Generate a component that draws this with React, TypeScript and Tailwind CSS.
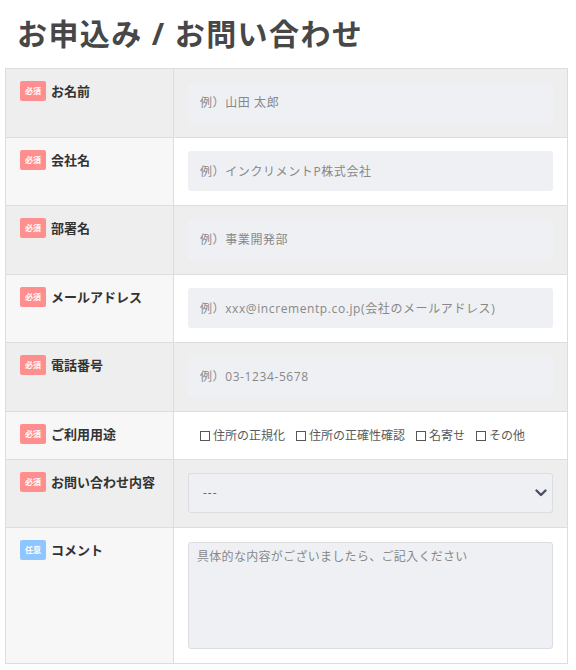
import React from 'react';

const FONT = { fontFamily: '"Open Sans", "Noto Sans CJK JP", sans-serif' };

const Badge = ({ required = true }: { required?: boolean }) => (
  <span
    className={`inline-flex h-[20px] w-[26px] shrink-0 items-center justify-center rounded-[2px] text-[8px] font-bold leading-none text-white ${
      required ? 'bg-[#ff8f8f]' : 'bg-[#8ec6ff]'
    }`}
  >
    {required ? '必須' : '任意'}
  </span>
);

const Row = ({
  label,
  required = true,
  grey,
  children,
}: {
  label: string;
  required?: boolean;
  grey: boolean;
  children: React.ReactNode;
}) => (
  <div className={`flex border-t border-[#dddddd] ${grey ? 'bg-[#eeeeee]' : 'bg-white'}`}>
    <div
      className={`flex w-[168px] shrink-0 items-start gap-[5px] border-r border-[#dddddd] pl-[14px] pt-[12px] ${
        grey ? 'bg-[#eeeeee]' : 'bg-[#f7f7f7]'
      }`}
    >
      <Badge required={required} />
      <span className="text-[13px] font-bold leading-[20px] text-[#333333]">{label}</span>
    </div>
    <div className="flex-1 px-[14px] py-[13.75px]">{children}</div>
  </div>
);

const TextInput = ({ placeholder }: { placeholder: string }) => (
  <input
    type="text"
    placeholder={placeholder}
    className="block h-[40px] w-full rounded-[3px] bg-[#eff0f4] px-[12px] text-[12px] tracking-[0.6px] text-[#333] outline-none placeholder:text-[#888888]"
    style={FONT}
  />
);

const Check = ({ label }: { label: string }) => (
  <label className="flex items-center gap-[3px]">
    <span className="inline-block h-[10px] w-[10px] border border-[#555555] bg-white" />
    <span className="text-[12px] leading-none text-[#5a5a5a]">{label}</span>
  </label>
);

export default function App() {
  return (
    <div className="min-h-screen bg-white pb-[7px]" style={FONT}>
      <h1 className="ml-[17px] pt-[16px] pb-[16px] text-[30px] font-bold leading-[36px] tracking-[1.4px] text-[#474747]">
        お申込み / お問い合わせ
      </h1>

      <div className="ml-[5px] w-[563px] border-b border-l border-r border-[#dddddd]">
        <Row label="お名前" grey>
          <TextInput placeholder="例）山田 太郎" />
        </Row>
        <Row label="会社名" grey={false}>
          <TextInput placeholder="例）インクリメントP株式会社" />
        </Row>
        <Row label="部署名" grey>
          <TextInput placeholder="例）事業開発部" />
        </Row>
        <Row label="メールアドレス" grey={false}>
          <TextInput placeholder="例）xxx@incrementp.co.jp(会社のメールアドレス)" />
        </Row>
        <Row label="電話番号" grey>
          <TextInput placeholder="例）03-1234-5678" />
        </Row>

        {/* checkbox row */}
        <div className="flex border-t border-[#dddddd] bg-white">
          <div className="flex h-[47px] w-[168px] shrink-0 items-start gap-[5px] border-r border-[#dddddd] bg-[#f7f7f7] pl-[14px] pt-[12px]">
            <Badge />
            <span className="text-[13px] font-bold leading-[20px] text-[#333333]">ご利用用途</span>
          </div>
          <div className="flex flex-1 items-center gap-[11px] pl-[26px] pt-[2px]">
            <Check label="住所の正規化" />
            <Check label="住所の正確性確認" />
            <Check label="名寄せ" />
            <Check label="その他" />
          </div>
        </div>

        <Row label="お問い合わせ内容" grey>
          <div className="relative">
            <select
              className="block h-[40px] w-full appearance-none rounded-[3px] border border-[#dcdde1] bg-[#eff0f4] px-[14px] text-[12px] tracking-[1px] text-[#666] outline-none"
              style={FONT}
              defaultValue=""
            >
              <option value="">---</option>
            </select>
            <svg
              className="pointer-events-none absolute right-[6px] top-[16px]"
              width="12"
              height="8"
              viewBox="0 0 12 8"
              fill="none"
            >
              <path d="M1.5 1.5 L6 6 L10.5 1.5" stroke="#4a5263" strokeWidth="2.4" strokeLinecap="round" strokeLinejoin="round" />
            </svg>
          </div>
        </Row>

        <Row label="コメント" required={false} grey={false}>
          <textarea
            placeholder="具体的な内容がございましたら、ご記入ください"
            className="block h-[107.5px] w-full resize-none rounded-[3px] border border-[#dcdde1] bg-[#eff0f4] px-[8px] py-[5px] text-[12px] leading-[18px] tracking-[0.3px] text-[#333] outline-none placeholder:text-[#888888]"
            style={FONT}
          />
        </Row>
      </div>
    </div>
  );
}
